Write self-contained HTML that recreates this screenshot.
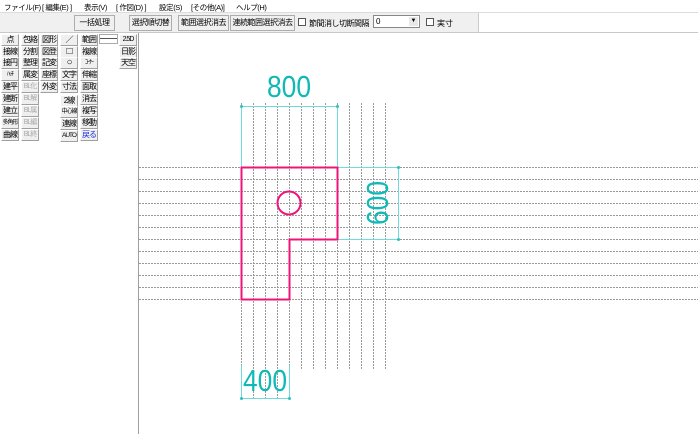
<!DOCTYPE html>
<html><head><meta charset="utf-8"><style>
*{margin:0;padding:0;box-sizing:border-box}
body{width:698px;height:434px;overflow:hidden;background:#fff;font-family:"Liberation Sans","Noto Sans CJK JP",sans-serif;font-size:9px;position:relative;color:#000}
.a{position:absolute;white-space:nowrap}
.menu{top:0;left:0;width:698px;height:12px;background:#fff}
.menu span{position:absolute;top:2px;font-size:7.5px;letter-spacing:-0.4px;white-space:nowrap}
.tb{top:12px;left:0;width:478px;height:21px;background:#f0f0f0;border-top:1px solid #dcdcdc;border-bottom:1px solid #c8c8c8}
.tbr{top:12px;left:478px;width:220px;height:21px;background:#fff;border-top:1px solid #dcdcdc;border-bottom:1px solid #c8c8c8;border-left:1px solid #ccc}
.tbtn{position:absolute;top:15px;height:16px;background:#f0f0f0;border:1px solid #adadad;font-size:8px;letter-spacing:-0.5px;line-height:14px;text-align:center;white-space:nowrap;overflow:hidden}
.b{position:absolute;height:12px;width:18px;background:#efefef;border-right:1px solid #a0a0a0;border-bottom:1px solid #a0a0a0;border-top:1px solid #fff;border-left:1px solid #fff;font-size:8px;line-height:10px;text-align:center;letter-spacing:-1px;overflow:hidden;white-space:nowrap}
.g{color:#aaa}
</style></head><body>
<div class="a menu">
<span style="left:4px">ファイル(F)</span><span style="left:42px">[ 編集(E) ]</span><span style="left:84px">表示(V)</span><span style="left:116px">[ 作図(D) ]</span><span style="left:159px">設定(S)</span><span style="left:191px">[その他(A)]</span><span style="left:236px">ヘルプ(H)</span>
</div>
<div class="a tb"></div><div class="a tbr"></div>
<div class="tbtn" style="left:74px;width:41px">一括処理</div>
<div class="tbtn" style="left:129px;width:43px">選択順切替</div>
<div class="tbtn" style="left:178px;width:51px">範囲選択消去</div>
<div class="tbtn" style="left:230px;width:65px">連続範囲選択消去</div>
<div class="a" style="left:298px;top:18px;width:8px;height:8px;border:1px solid #555;background:#fff"></div>
<div class="a" style="left:309px;top:18px;font-size:8px;letter-spacing:-0.5px">節間消し</div>
<div class="a" style="left:339px;top:18px;font-size:8px;letter-spacing:-0.5px">切断間隔</div>
<div class="a" style="left:373px;top:15px;width:47px;height:13px;border:1px solid #888;background:#fff;font-size:8px;padding-left:2px;line-height:11px">0<span style="position:absolute;right:1px;top:1px;width:9px;height:9px;background:#e8e8e8;font-size:6px;text-align:center;line-height:9px">▼</span></div>
<div class="a" style="left:426px;top:18px;width:8px;height:8px;border:1px solid #555;background:#fff"></div>
<div class="a" style="left:437px;top:18px;font-size:8px">実寸</div>
<div class="a" style="left:0;top:33px;width:138px;height:401px;background:#fff"></div>
<div class="a" style="left:138px;top:33px;width:1px;height:401px;background:#a0a0a0"></div>
<div class="b" style="left:1px;top:34px">点</div>
<div class="b" style="left:1px;top:46px">接線</div>
<div class="b" style="left:1px;top:57px">接円</div>
<div class="b" style="left:1px;top:69px;font-size:6px">ﾊｯﾁ</div>
<div class="b" style="left:1px;top:81px">建平</div>
<div class="b" style="left:1px;top:93px">建断</div>
<div class="b" style="left:1px;top:105px">建立</div>
<div class="b" style="left:1px;top:117px;font-size:6px">多角形</div>
<div class="b" style="left:1px;top:129px">曲線</div>
<div class="b" style="left:21px;top:34px">包絡</div>
<div class="b" style="left:21px;top:46px">分割</div>
<div class="b" style="left:21px;top:57px">整理</div>
<div class="b" style="left:21px;top:69px">属変</div>
<div class="b g" style="left:21px;top:81px;font-size:7px">BL化</div>
<div class="b g" style="left:21px;top:93px;font-size:7px">BL解</div>
<div class="b g" style="left:21px;top:105px;font-size:7px">BL属</div>
<div class="b g" style="left:21px;top:117px;font-size:7px">BL編</div>
<div class="b g" style="left:21px;top:129px;font-size:7px">BL終</div>
<div class="b" style="left:40px;top:34px">図形</div>
<div class="b" style="left:40px;top:46px">図登</div>
<div class="b" style="left:40px;top:57px">記変</div>
<div class="b" style="left:40px;top:69px">座標</div>
<div class="b" style="left:40px;top:81px">外変</div>
<div class="b" style="left:60px;top:34px">／</div>
<div class="b" style="left:60px;top:46px;font-size:10px">□</div>
<div class="b" style="left:60px;top:57px;font-size:10px">○</div>
<div class="b" style="left:60px;top:69px">文字</div>
<div class="b" style="left:60px;top:81px">寸法</div>
<div class="b" style="left:60px;top:95px">2線</div>
<div class="b" style="left:60px;top:106px;font-size:6px">中心線</div>
<div class="b" style="left:60px;top:118px">連線</div>
<div class="b" style="left:60px;top:130px;font-size:6.5px">AUTO</div>
<div class="b" style="left:80px;top:34px">範囲</div>
<div class="b" style="left:80px;top:46px">複線</div>
<div class="b" style="left:80px;top:57px;font-size:6px">ｺｰﾅｰ</div>
<div class="b" style="left:80px;top:69px">伸縮</div>
<div class="b" style="left:80px;top:81px">面取</div>
<div class="b" style="left:80px;top:93px">消去</div>
<div class="b" style="left:80px;top:105px">複写</div>
<div class="b" style="left:80px;top:117px">移動</div>
<div class="b" style="left:80px;top:129px;color:#2030e0">戻る</div>
<div class="a" style="left:99px;top:34px;width:19px;height:10px;border:1px solid #aaa;background:#fff"><div style="margin-top:3px;height:1px;background:#555"></div></div>
<div class="b" style="left:119px;top:34px;font-size:7px">2.5D</div>
<div class="b" style="left:119px;top:46px">日影</div>
<div class="b" style="left:119px;top:57px">天空</div>
<svg class="a" style="left:0;top:0" width="698" height="434">
<g stroke="#999" stroke-width="1" stroke-dasharray="2,1" fill="none">
<path d="M241.5 103V398M253.5 103V398M265.5 103V398M277.5 103V398M289.5 103V398M301.5 103V369M313.5 103V369M325.5 103V369M337.5 103V369M349.5 103V369M361.5 103V369M373.5 103V369M385.5 103V369"/>
<path d="M139 167.5H698M139 179.5H698M139 191.5H698M139 203.5H698M139 215.5H698M139 227.5H698M139 239.5H698M139 251.5H698M139 263.5H698M139 275.5H698M139 287.5H698M139 299.5H698"/>
</g>
<g stroke="#6fdcdc" stroke-width="1" fill="none">
<path d="M241.5 106.5H337.5M241.5 106V167M337.5 106V167"/>
<path d="M337.5 167.5H398.5M398.5 167V239M337.5 239.5H398.5"/>
<path d="M241.5 398.5H289.5M241.5 365V398M289.5 365V398"/>
</g>
<g fill="#2cc0c0"><circle cx="241.5" cy="106.5" r="1.5"/><circle cx="337.5" cy="106.5" r="1.5"/><circle cx="398.5" cy="167.5" r="1.5"/><circle cx="398.5" cy="239.5" r="1.5"/><circle cx="241.5" cy="398.5" r="1.5"/><circle cx="289.5" cy="398.5" r="1.5"/></g>
<path d="M241.5 167.5H337.5V239.5H289.5V299.5H241.5Z" fill="none" stroke="#f0147a" stroke-width="2"/>
<circle cx="289" cy="203" r="11.5" fill="none" stroke="#f0147a" stroke-width="2"/>
<g fill="#10b8b8" font-family="Liberation Sans Narrow,Liberation Sans,sans-serif" font-size="31">
<text x="289" y="97" text-anchor="middle" textLength="44" lengthAdjust="spacingAndGlyphs">800</text>
<text x="265" y="391" text-anchor="middle" textLength="44" lengthAdjust="spacingAndGlyphs">400</text>
<text transform="translate(388,203) rotate(-90)" text-anchor="middle" textLength="44" lengthAdjust="spacingAndGlyphs">600</text>
</g>
</svg>
</body></html>
